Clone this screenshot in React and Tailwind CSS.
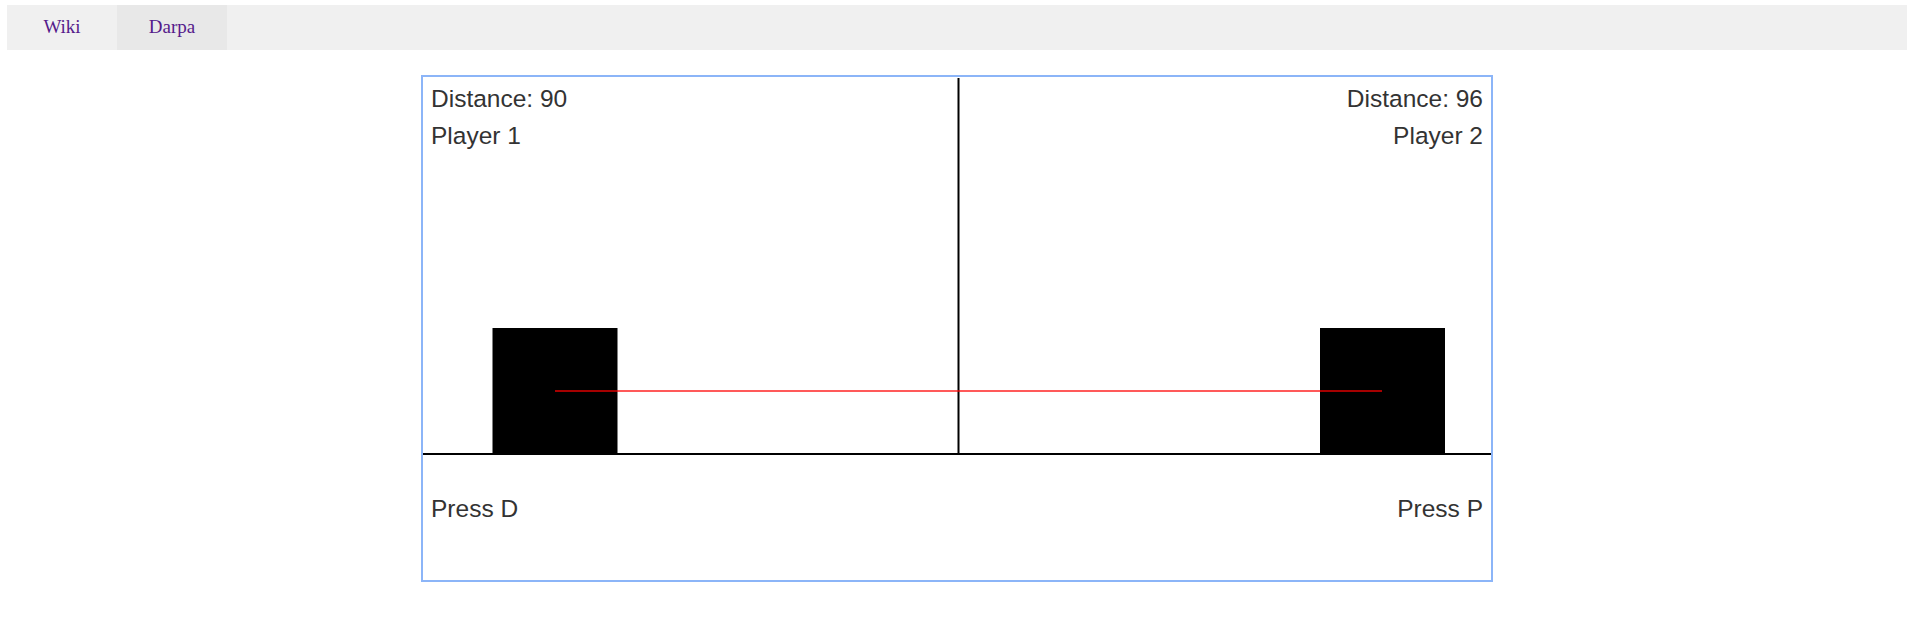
import React from 'react';

const tabs = [
  { name: 'Wiki', active: false },
  { name: 'Darpa', active: true },
];

function Scene() {
  return (
    <svg width="1068" height="503" viewBox="0 0 1068 503" className="col-start-1 row-start-1 block">
      {/* middle divider */}
      <rect x="534.5" y="1" width="2" height="377" fill="#000" />
      {/* ground */}
      <rect x="0" y="376" width="1068" height="2" fill="#000" />
      {/* players */}
      <rect x="69.5" y="251" width="125" height="125" fill="#000" />
      <rect x="897" y="251" width="125" height="125" fill="#000" />
      {/* distance rope */}
      <rect x="132" y="313" width="827" height="2" fill="#ff0000" fillOpacity="0.65" />
    </svg>
  );
}

export default function App() {
  return (
    <div className="min-h-screen bg-white pt-[5px] pl-[7px] pr-[10px]">
      <nav className="flex h-[45px] bg-[#f0f0f0]">
        {tabs.map((tab) => (
          <a
            key={tab.name}
            href="#"
            className={
              'flex w-[110px] items-center justify-center text-[19px] text-[#551a8b] ' +
              (tab.active ? 'bg-[#e8e8e8]' : '')
            }
            style={{ fontFamily: '"Liberation Serif", "Times New Roman", serif' }}
          >
            {tab.name}
          </a>
        ))}
      </nav>

      <div className="mx-auto mt-[25px] w-[1072px] border-2 border-[#8cb5f8]">
        <div className="grid">
          <Scene />
          <div
            className="col-start-1 row-start-1 flex flex-col px-[8px] pt-[4px] text-[24.5px] leading-[36.75px] text-[#333]"
            style={{ fontFamily: '"Liberation Sans", Arial, sans-serif' }}
          >
            <div className="flex justify-between">
              <div className="flex flex-col">
                <span>Distance: 90</span>
                <span>Player 1</span>
              </div>
              <div className="flex flex-col items-end">
                <span>Distance: 96</span>
                <span>Player 2</span>
              </div>
            </div>
            <div className="mt-[336px] flex justify-between">
              <span>Press D</span>
              <span>Press P</span>
            </div>
          </div>
        </div>
      </div>
    </div>
  );
}
